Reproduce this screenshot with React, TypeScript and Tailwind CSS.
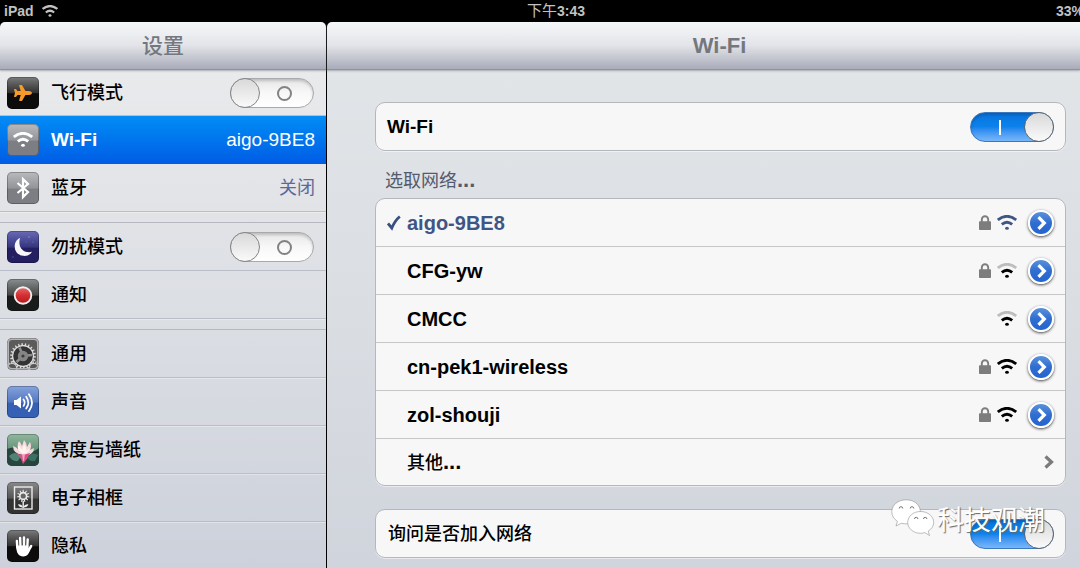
import type { ReactNode } from 'react';
import { FaPlane } from 'react-icons/fa';

function WifiGlyph({ className, outer = 'currentColor' }: { className: string; outer?: string }) {
  return (
    <svg viewBox="0 0 20 15" className={className} fill="none" aria-hidden="true">
      <path d="M.8 5Q10-2.400 19.200 5" stroke={outer} strokeWidth="2.800" />
      <path d="M4.800 9.400Q10 5 15.200 9.400" stroke="currentColor" strokeWidth="2.800" />
      <ellipse cx="10" cy="13.200" rx="1.900" ry="1.500" fill="currentColor" />
    </svg>
  );
}

function BluetoothGlyph() {
  return (
    <svg viewBox="0 0 32 32" className="size-8" fill="none" stroke="#fff" strokeWidth="2.2" aria-hidden="true">
      <path d="M10.5 11 21 20l-5 5V7.200l5 4.800L10.500 21" strokeLinejoin="miter" />
    </svg>
  );
}

function MoonGlyph() {
  return (
    <svg viewBox="0 0 32 32" className="size-8" aria-hidden="true">
      <path d="M13 7C5.500 10 5.500 23.500 16 24.800c4.500.5 7.300-1.300 9-4C18.500 22.500 10 18.500 13 7Z" fill="#f6f6fb" />
      <g fill="#8f8fd0">
        <circle cx="22" cy="6" r=".8" />
        <circle cx="26" cy="11" r=".5" />
        <circle cx="6" cy="26" r=".5" />
        <circle cx="19" cy="11" r=".4" />
      </g>
    </svg>
  );
}

function RecordGlyph() {
  return (
    <svg viewBox="0 0 32 32" className="size-8" aria-hidden="true">
      <defs>
        <linearGradient id="record" x1="0" y1="0" x2="0" y2="1">
          <stop offset="0" stopColor="#e8696a" />
          <stop offset=".5" stopColor="#d22f32" />
          <stop offset="1" stopColor="#b8181c" />
        </linearGradient>
      </defs>
      <circle cx="16" cy="16.500" r="8.300" fill="url(#record)" stroke="#f3eeee" strokeWidth="1.900" />
    </svg>
  );
}

function gearPath(cx: number, cy: number, radius: number, teeth: number) {
  const points: string[] = [];
  for (let i = 0; i < teeth; i++) {
    [[0, 0], [0.12, 2], [0.38, 2], [0.5, 0]].forEach(([turn, lift]) => {
      const angle = ((i + turn) / teeth) * Math.PI * 2;
      const r = radius + lift;
      points.push(`${(cx + r * Math.cos(angle)).toFixed(2)} ${(cy + r * Math.sin(angle)).toFixed(2)}`);
    });
  }
  return `M${points.join('L')}Z`;
}

function GearGlyph() {
  return (
    <svg viewBox="0 0 32 32" className="size-8" aria-hidden="true">
      <rect x="1" y="1" width="30" height="30" rx="4" fill="#5b5b5b" />
      <path d={gearPath(16, 18, 11, 22)} fill="#dcdcdc" />
      <circle cx="16" cy="18" r="9.800" fill="#333" />
      <path d="M16 18 12.500 9.500M16 18l-6.500 6M16 18l9-1" stroke="#8d8d8d" strokeWidth="2.600" />
      <circle cx="16" cy="18" r="5.200" fill="#858585" />
      <circle cx="16" cy="18" r="1.600" fill="#3d3d3d" />
      <path d={gearPath(5, 30, 5, 14)} fill="#cfcfcf" />
      <path d={gearPath(27, 30, 5, 14)} fill="#cfcfcf" />
      <circle cx="5" cy="30" r="4" fill="#555" />
      <circle cx="27" cy="30" r="4" fill="#555" />
      <rect x="1.200" y="1.200" width="29.600" height="29.600" rx="4" fill="none" stroke="#b3b3b3" strokeWidth="1.600" />
    </svg>
  );
}

function SoundGlyph() {
  return (
    <svg viewBox="0 0 32 32" className="size-8" fill="none" stroke="#fff" strokeLinecap="round" aria-hidden="true">
      <path d="M7 14h2.500L14 10.500v12l-4.500-3.500H7Z" fill="#fff" stroke="none" />
      <path d="M16.500 13.500q2.300 3.200 0 6.400" strokeWidth="1.700" />
      <path d="M19.200 10.800q4.200 5.900 0 11.800" strokeWidth="1.800" />
      <path d="M21.900 8.300q6.200 8.400 0 16.800" strokeWidth="1.800" />
    </svg>
  );
}

function LotusGlyph() {
  return (
    <svg viewBox="0 0 32 32" className="size-8" aria-hidden="true">
      <path d="M0 15Q8 11 14 17T32 14v18H0Z" fill="#27453f" />
      <path d="M2 22Q8 16 14 22l-3 5Q5 28 2 22Z" fill="#4f8274" />
      <path d="M20 23q6-6 11-2l-3 6q-6 1-8-4Z" fill="#3d6e62" />
      <path d="M16 21Q6 20 6 12q3 1 5 3-1-5 1-8 2 2 3 5l2-6q3 3 3 7l3-5q2 4 0 8l4-2q0 6-8 8Z" fill="#f5d9dc" />
      <path d="M16 20Q10 17 11 11q3 2 4 5l2-6q3 4 2 7l4-3q-1 5-7 6Z" fill="#fff4ee" />
      <path d="M10 20q6 2 13-1l-3 6-4 5-2-5Z" fill="#d94f86" />
      <path d="M15 20h3l-1 7h-1Z" fill="#f6a5c2" />
    </svg>
  );
}

function FrameGlyph() {
  return (
    <svg viewBox="0 0 32 32" className="size-8" fill="none" stroke="#ececec" aria-hidden="true">
      <rect x="7.500" y="5" width="17.500" height="22" strokeWidth="1.400" />
      <path d={gearPath(16.2, 14, 4.2, 11)} fill="#ececec" stroke="none" />
      <circle cx="16.200" cy="14" r="2.600" fill="#666" stroke="none" />
      <path d="M16.200 19v7" strokeWidth="1.400" />
      <path d="M16 25.500q-1-3.500-5-3.300Q12 25.500 16 25.500Zm.4 0q1-3.500 5-3.300Q20.400 25.500 16.400 25.500Z" fill="#ececec" stroke="none" />
    </svg>
  );
}

function HandGlyph() {
  return (
    <svg viewBox="0 0 32 32" className="size-8" fill="none" stroke="#fff" strokeLinecap="round" aria-hidden="true">
      <path d="M10.300 17.500 9.900 11M13.500 16.500 13.100 8M17 16.500V7.500M20.300 17.500 20.700 9.500" strokeWidth="2.400" />
      <path d="m21.500 20.500 2.600-4.300" strokeWidth="2.600" />
      <path d="M9.100 15.500h12.300v2.300l1.400 2.700q-1.500 5.800-6.400 6-4.400 0-6.200-4Q9 19.500 9.100 15.500Z" fill="#fff" stroke="none" />
    </svg>
  );
}

function LockGlyph() {
  return (
    <svg viewBox="0 0 12 15" className="h-[15px] w-3 shrink-0" aria-hidden="true">
      <path d="M2.800 7V4.400a3.200 3.200 0 0 1 6.400 0V7" fill="none" stroke="#7d7d7d" strokeWidth="1.900" />
      <rect y="6.300" width="12" height="8.700" rx=".8" fill="#7d7d7d" />
    </svg>
  );
}

function WeChatGlyph() {
  return (
    <svg viewBox="0 0 44 38" className="h-[38px] w-11" aria-hidden="true">
      <g fill="#fff" stroke="#8b8b8b" strokeOpacity=".7" strokeWidth=".8">
        <path d="M15 .8C7 .8.800 6 .800 12.800c0 4 2.200 7.400 5.600 9.500L5 27l5.300-2.700q2.700.7 6.300.5C26 24 30 18 29.300 11.500 28.500 5 22.500.8 15 .8Z" />
        <path d="M29.500 12.500c-7.200 0-12.800 4.800-12.800 10.900s5.800 10.900 12.800 10.900q2.200 0 4.400-.7l4.600 2.900-1.300-4.400c3.300-2 5.500-5 5.500-8.700 0-6.100-6-10.900-13.200-10.900Z" />
      </g>
      <path d="M8.200 9.500a1.800 1.800 0 1 1 3.600 0M19.200 9.500a1.800 1.800 0 1 1 3.600 0M23.500 20a1.700 1.700 0 1 1 3.400 0M32.500 20a1.700 1.700 0 1 1 3.400 0" fill="none" stroke="#777" />
    </svg>
  );
}

function Toggle({ id, on = false }: { id: string; on?: boolean }) {
  return (
    <input
      id={id}
      type="checkbox"
      defaultChecked={on}
      className="relative h-[30px] w-21 shrink-0 appearance-none rounded-full border border-[#a9a9ab] bg-linear-to-b from-[#e6e6e7] via-[#f8f8f8] to-white shadow-[inset_0_2px_3px_rgba(0,0,0,0.18)] before:absolute before:-left-px before:-top-px before:size-[30px] before:rounded-full before:border before:border-[#858587] before:bg-linear-to-b before:from-[#d9d9da] before:to-[#fafafa] after:absolute after:left-[46px] after:top-[7px] after:size-[15px] after:rounded-full after:border-2 after:border-[#828284] checked:border-[#3b78bd] checked:from-[#0873dc] checked:via-[#0c82ec] checked:to-[#78b7fa] checked:before:left-auto checked:before:-right-px checked:before:border-[#5e6670] checked:after:left-7 checked:after:top-[7px] checked:after:h-[15px] checked:after:w-0.5 checked:after:rounded-none checked:after:border-0 checked:after:bg-white"
    />
  );
}

type RowProps = { tile: string; icon: ReactNode; label: string; toggleId?: string; value?: string; active?: boolean; first?: boolean };

function SidebarRow({ tile, icon, label, toggleId, value, active, first }: RowProps) {
  const inner = (
    <>
      <span className={`flex size-8 shrink-0 items-center justify-center overflow-hidden rounded-[5px] shadow-[inset_0_0_0_1px_rgba(0,0,0,0.25)] ${tile}`}>
        {icon}
      </span>
      <span className={active ? 'text-[19px] font-bold text-white' : 'text-lg font-medium text-black'}>{label}</span>
      {value && (
        <span className={active ? 'ml-auto text-[19px] text-white' : 'ml-auto text-lg text-[#5b6899]'}>{value}</span>
      )}
    </>
  );
  const row = 'flex w-full items-center gap-3 border-b pl-[7px] text-left leading-6';
  if (toggleId) {
    return (
      <li className={`${row} border-[#bbbec8] pr-3 ${first ? 'h-[46px]' : 'h-12'}`}>
        <label htmlFor={toggleId} className="flex grow items-center gap-3">
          {inner}
        </label>
        <Toggle id={toggleId} />
      </li>
    );
  }
  return (
    <li>
      <button
        type="button"
        className={`${row} h-12 pr-[11px] ${active ? 'border-[#0a5ad8] bg-linear-to-b from-[#058cf5] to-[#015de6]' : 'border-[#bbbec8] shadow-[0_1px_0_rgba(255,255,255,0.35)]'}`}
      >
        {inner}
      </button>
    </li>
  );
}

const black = 'bg-linear-to-b from-[#7c7c7c] from-0% via-[#303030] via-50% to-[#0c0c0c] to-52%';
const gray = 'bg-linear-to-b from-[#b9babd] from-0% via-[#94959a] via-50% to-[#7d7e84] to-54%';

const groups: RowProps[][] = [
  [
    { tile: black, icon: <FaPlane className="size-[18px] text-[#f59a2b]" />, label: '飞行模式', toggleId: 'airplane', first: true },
    { tile: gray, icon: <WifiGlyph className="h-[15px] w-5 text-white" />, label: 'Wi-Fi', value: 'aigo-9BE8', active: true },
    { tile: gray, icon: <BluetoothGlyph />, label: '蓝牙', value: '关闭' },
  ],
  [
    { tile: 'bg-linear-to-b from-[#6a6ab8] via-[#36367f] via-50% to-[#241f60] to-54%', icon: <MoonGlyph />, label: '勿扰模式', toggleId: 'dnd' },
    { tile: 'bg-linear-to-b from-[#8c8f90] via-[#454747] via-50% to-[#1a1b1b] to-54%', icon: <RecordGlyph />, label: '通知' },
  ],
  [
    { tile: 'bg-[#8c8c8c]', icon: <GearGlyph />, label: '通用' },
    { tile: 'bg-linear-to-b from-[#86a3dd] via-[#5478c0] via-50% to-[#3560b4] to-54%', icon: <SoundGlyph />, label: '声音' },
    { tile: 'bg-linear-to-b from-[#8fb79e] to-[#3e6f58]', icon: <LotusGlyph />, label: '亮度与墙纸' },
    { tile: 'bg-linear-to-b from-[#8a8a8a] via-[#555555] via-50% to-[#333333] to-54%', icon: <FrameGlyph />, label: '电子相框' },
    { tile: black, icon: <HandGlyph />, label: '隐私' },
  ],
];

const networks = [
  { name: 'aigo-9BE8', locked: true, weak: false, joined: true },
  { name: 'CFG-yw', locked: true, weak: true, joined: false },
  { name: 'CMCC', locked: false, weak: true, joined: false },
  { name: 'cn-pek1-wireless', locked: true, weak: false, joined: false },
  { name: 'zol-shouji', locked: true, weak: false, joined: false },
];

const titleBar =
  'relative flex h-12 shrink-0 items-center justify-center border-b border-[#8f919e] bg-linear-to-b from-[#f5f8f9] via-[#e3e4e9] via-50% to-[#a9acb9] text-[#74777e] shadow-[0_1px_2px_rgba(110,115,130,0.5)]';
const card = 'rounded-[10px] border border-[#b4b7bc] bg-[#f7f7f7] shadow-[0_1px_0_rgba(255,255,255,0.5)]';

export default function App() {
  return (
    <div className="flex h-screen flex-col overflow-hidden bg-black font-['Liberation_Sans','Noto_Sans_CJK_SC',sans-serif]">
      <header className="grid h-[22px] shrink-0 grid-cols-[1fr_auto_1fr] items-center pl-1 text-sm leading-5 font-bold text-[#c2c2c2]">
        <div className="flex items-center gap-2">
          iPad
          <WifiGlyph className="h-3 w-4" />
        </div>
        <time className="pl-7">
          <span className="text-[15px] font-normal">下午</span>3:43
        </time>
        <span className="-mr-1 justify-self-end">33%</span>
      </header>

      <div className="flex min-h-0 grow">
        <aside className="flex w-[327px] shrink-0 flex-col border-r border-black">
          <div className={`${titleBar} rounded-t-[5px]`}>
            <h1 className="text-[21px] leading-6 font-medium">设置</h1>
          </div>
          <nav className="flex grow flex-col gap-[11px] overflow-y-auto bg-linear-to-b from-[#e9eaec] via-[#dbdee3] via-50% to-[#cdd1db] [scrollbar-width:none]">
            {groups.map((rows, i) => (
              <ul key={i} className={i ? 'shadow-[0_-1px_0_#b5b8c3]' : ''}>
                {rows.map((r) => (
                  <SidebarRow key={r.label} {...r} />
                ))}
              </ul>
            ))}
          </nav>
        </aside>

        <main className="flex min-w-0 grow flex-col">
          <div className={`${titleBar} rounded-tl-[5px] pl-8`}>
            <h2 className="text-[22px] leading-6 font-bold">Wi-Fi</h2>
          </div>
          <div className="grow overflow-y-auto bg-linear-to-b from-[#e1e5e8] via-[#dadde2] via-50% to-[#d0d4dc] pt-8 pr-[14px] pb-[10px] pl-12 [scrollbar-width:none]">
            <div className={`${card} flex h-[49px] items-center justify-between px-[11px]`}>
              <label htmlFor="wifi" className="text-[19px] leading-6 font-bold">
                Wi-Fi
              </label>
              <Toggle id="wifi" on />
            </div>

            <h3 className="flex h-[47px] items-center px-[10px] pt-3 text-lg leading-6 text-[#545b6e]">
              <span>
                选取网络<b className="text-[22px] leading-6">...</b>
              </span>
            </h3>

            <ul className={card}>
              {networks.map((n) => (
                <li key={n.name} className="flex h-12 items-center border-b border-[#c6c7c9] pr-[11px] pl-[11px]">
                  <span className="w-5 shrink-0">
                    {n.joined && (
                      <svg viewBox="0 0 14 16" className="h-4 w-[14px]" fill="none" stroke="#3a5080" strokeWidth="2.800" aria-hidden="true">
                        <path d="M1 8.500 4.800 13Q8 5.500 12.800 1.500" />
                      </svg>
                    )}
                  </span>
                  <span className={`grow text-xl leading-6 font-bold ${n.joined ? 'text-[#3f5685]' : 'text-black'}`}>{n.name}</span>
                  {n.locked && <LockGlyph />}
                  <WifiGlyph
                    className={`mr-[11px] ml-1.5 h-[15px] w-5 shrink-0 ${n.joined ? 'text-[#3f5685]' : 'text-black'}`}
                    outer={n.weak ? '#bdbdbd' : 'currentColor'}
                  />
                  <button
                    type="button"
                    aria-label={`${n.name} 详情`}
                    className="flex size-[26px] items-center justify-center rounded-full border-2 border-white bg-linear-to-b from-[#5b91dc] via-[#2f6ed0] via-50% to-[#2563cf] shadow-[0_1px_3px_rgba(0,0,0,0.75)]"
                  >
                    <svg viewBox="0 0 20 20" className="size-5 shrink-0" fill="none" stroke="#fff" strokeWidth="3.200" aria-hidden="true">
                      <path d="m7.500 4.200 5.800 5.800-5.800 5.800" />
                    </svg>
                  </button>
                </li>
              ))}
              <li>
                <button type="button" className="flex h-[46px] w-full items-center justify-between pr-[11px] pl-[31px] text-lg leading-6 font-medium">
                  <span>
                    其他<b className="text-[22px] leading-6">...</b>
                  </span>
                  <svg viewBox="0 0 10 14" className="h-[14px] w-[10px]" fill="none" stroke="#7b7b7b" strokeWidth="3.200" aria-hidden="true">
                    <path d="M1.500 1.500 7.500 7l-6 5.500" />
                  </svg>
                </button>
              </li>
            </ul>

            <div className={`${card} relative mt-[23px] flex h-[49px] items-center justify-between pr-[11px] pl-3`}>
              <label htmlFor="ask" className="text-lg leading-6 font-medium">
                询问是否加入网络
              </label>
              <Toggle id="ask" on />
              <div className="pointer-events-none absolute right-5 bottom-5 flex items-end gap-0.5 text-white">
                <WeChatGlyph />
                <span className="text-[27px] leading-8 [text-shadow:1px_1px_1px_#666]">科技观潮</span>
              </div>
            </div>
          </div>
        </main>
      </div>
    </div>
  );
}
